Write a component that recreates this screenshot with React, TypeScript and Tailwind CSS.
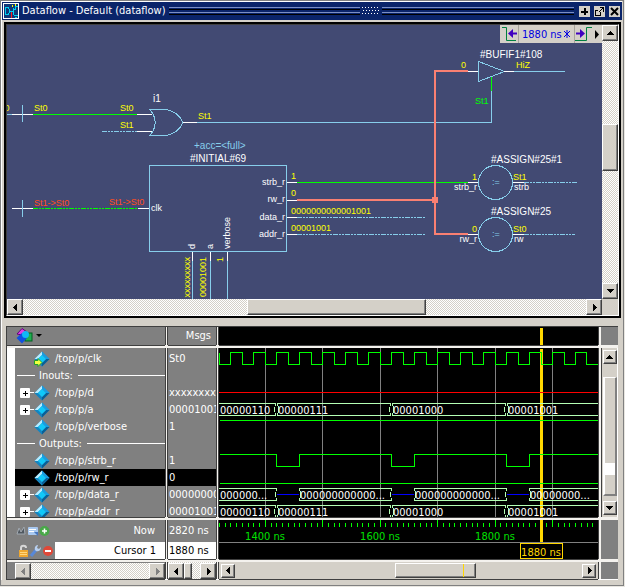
import type { ReactNode } from "react";

const UI_FONT = "font-['DejaVu_Sans_Condensed','DejaVu_Sans',sans-serif]";
const SKY = "#87ceeb";
const SALMON = "#fa8072";
const LIME = "#00ff00";
const YELLOW = "#ffff00";
const GOLD = "#ffd700";
const PALE = "#b4ffb4";
const DITHER =
  "bg-[repeating-conic-gradient(#ffffff_0_25%,#d4d0c8_0_50%)] bg-[length:2px_2px]";
const RAISED =
  "border border-t-white border-l-white border-r-[#404040] border-b-[#404040] bg-[#d4d0c8] shadow-[inset_-1px_-1px_#808080]";

/* ---------- drawing helpers ---------- */

type Seg = { a: number; b: number; at: number; c: string; w?: number };

const H = ({ a, b, at, c, w = 1 }: Seg) => (
  <rect x={a} y={at} width={b - a} height={w} fill={c} />
);
const V = ({ a, b, at, c, w = 1 }: Seg) => (
  <rect x={at} y={a} width={w} height={b - a} fill={c} />
);
const Dash = ({ a, b, at, c }: Seg) => (
  <path d={`M${a} ${at + 0.5}H${b}`} stroke={c} strokeDasharray="5 1 2 1 2 1" fill="none" />
);

type LabelProps = {
  x: number;
  y: number;
  c?: string;
  size?: number;
  end?: boolean;
  up?: boolean;
  children: ReactNode;
};

const Label = ({ x, y, c = "#ffffff", size = 9, end, up, children }: LabelProps) => (
  <text
    x={x}
    y={y}
    fill={c}
    fontSize={size}
    textAnchor={end ? "end" : "start"}
    transform={up ? `rotate(-90 ${x} ${y})` : undefined}
  >
    {children}
  </text>
);

/* ---------- scroll bars ---------- */

type Dir = "left" | "right" | "up" | "down";

const ARROWS: Record<Dir, string> = {
  left: "M5 0V7L1 4V3Z",
  right: "M2 0V7L6 4V3Z",
  up: "M0 5H7L4 1H3Z",
  down: "M0 1H7L4 5H3Z",
};

function ArrowButton({ dir, flat, dim }: { dir: Dir; flat?: boolean; dim?: boolean }) {
  const size = flat ? "h-[14px] w-[14px]" : "h-4 w-4";
  return (
    <button
      type="button"
      aria-label={`Scroll ${dir}`}
      disabled={dim}
      className={`flex shrink-0 items-center justify-center ${size} ${RAISED}`}
    >
      <svg width="7" height="7" shapeRendering="crispEdges">
        <path d={ARROWS[dir]} fill={dim ? "#808080" : "#000000"} />
      </svg>
    </button>
  );
}

/* ---------- title bar ---------- */

function Grooves() {
  return (
    <div className="flex h-2 min-w-0 grow flex-col justify-between">
      <div className="h-[3px] border-t border-b border-t-[#7b8fc4] border-b-black" />
      <div className="h-[3px] border-t border-b border-t-[#7b8fc4] border-b-black" />
    </div>
  );
}

function TitleButton({ label, children }: { label: string; children: ReactNode }) {
  return (
    <button
      type="button"
      aria-label={label}
      className="flex h-[11px] w-[11px] shrink-0 items-center justify-center bg-[#d4d0c8]"
    >
      <svg width="11" height="11" shapeRendering="crispEdges" fill="none" stroke="#000000">
        {children}
      </svg>
    </button>
  );
}

function TitleBar() {
  const dots: ReactNode[] = [];
  for (let row = 0; row < 3; row++)
    for (let i = 0; i < 6; i++)
      dots.push(
        <rect key={`${row}-${i}`} x={i * 3 + (row % 2 ? 3 : 2)} y={row * 3} width="1" height="1" fill="#ffffff" />,
      );
  return (
    <header className="flex h-[18px] items-center bg-[#0a246a] pr-[2px] pl-px text-white">
      <svg width="16" height="16" shapeRendering="crispEdges" aria-hidden="true">
        <rect width="16" height="16" fill="#ffffff" />
        <rect x="1" y="1" width="14" height="14" fill="#103878" />
        <path
          d="M2.500 4.500H5L6.500 7V9L5 11.500H2.500ZM7 8.500H10M10.500 4.500V11.500M10 6.500H13M12.500 6V3.500H15M11 12.500H15M11.500 14.500H14"
          stroke="#00d0f0"
          fill="none"
        />
        <path d="M8.500 9V15" stroke="#ff2020" />
        <path d="M9.500 2V4M12.500 1V3" stroke="#ffff00" />
      </svg>
      <h1 className="ml-[3px] text-[11px] leading-[18px] whitespace-nowrap">
        Dataflow - Default (dataflow)
      </h1>
      <div className="ml-[3px] flex min-w-0 grow items-center">
        <Grooves />
        <svg width="22" height="8" className="shrink-0" shapeRendering="crispEdges">
          {dots}
        </svg>
        <Grooves />
      </div>
      <div className="ml-[5px] flex gap-[4px]">
        <TitleButton label="Zoom pane">
          <path d="M2 5.500H9M5.500 2V9" strokeWidth="2" />
        </TitleButton>
        <TitleButton label="Undock">
          <path d="M5.500 1.500H9.500V5.500M9 2L5 6M4 4.500H1.500V9.500H6.500V6" />
        </TitleButton>
        <TitleButton label="Close">
          <path d="M2 2L9 9M9 2L2 9" strokeWidth="2" shapeRendering="auto" />
        </TitleButton>
      </div>
    </header>
  );
}

/* ---------- dataflow schematic ---------- */

function TimeBar() {
  return (
    <div className="absolute top-0 right-0 flex h-[18px] items-center bg-[#d4d0c8]">
      <button type="button" aria-label="Previous event" className="h-[18px] w-[18px]">
        <svg width="18" height="18" fill="none">
          <path d="M2 2.500H6.500V15.500H16" stroke="#008040" />
          <path d="M17 8.500H11" stroke="#4000c0" strokeWidth="2" />
          <path d="M13 4V13L8 8.500Z" fill="#4000c0" />
        </svg>
      </button>
      <label className="flex h-[18px] items-center border-x border-[#a8a49c] px-[3px] text-[#0000e0]">
        <input
          aria-label="Current time"
          defaultValue="1880 ns"
          className="h-[18px] w-[41px] bg-transparent text-[11px] outline-none"
        />
        <svg width="8" height="8" fill="none" stroke="#0000e0" aria-hidden="true">
          <path d="M4 0V8M1 1L4 4L7 1M1 7L4 4L7 7" />
        </svg>
      </label>
      <button type="button" aria-label="Next event" className="h-[18px] w-[17px]">
        <svg width="17" height="18" fill="none">
          <path d="M0 15.500H11.500V2.500H17" stroke="#008040" />
          <path d="M1 8.500H6" stroke="#4000c0" strokeWidth="2" />
          <path d="M5 4V13L10 8.500Z" fill="#4000c0" />
        </svg>
      </button>
      <button type="button" aria-label="More" className="h-[18px] w-[10px]">
        <svg width="10" height="18">
          <path d="M3 5V14L7 9.500Z" fill="#000000" />
        </svg>
      </button>
    </div>
  );
}

const OUTPUT_PINS = [
  { y: 182, name: "strb_r", value: "1" },
  { y: 199, name: "rw_r", value: "0" },
  { y: 217, name: "data_r", value: "0000000000001001" },
  { y: 234, name: "addr_r", value: "00001001" },
];

const BOTTOM_PINS = [
  { x: 192, name: "d", value: "xxxxxxxxx", vx: 190 },
  { x: 210, name: "a", value: "00001001", vx: 206 },
  { x: 227, name: "verbose", value: "1", vx: 223 },
];

const ASSIGNS = [
  { y: 182, title: "#ASSIGN#25#1", level: "1", src: "strb_r", out: "St1", dst: "strb", end: 578 },
  { y: 234, title: "#ASSIGN#25", level: "0", src: "rw_r", out: "St0", dst: "rw", end: 575 },
];

function Schematic() {
  return (
    <svg
      viewBox="7 25 595 274"
      width="595"
      height="274"
      className="block shrink-0 font-['Liberation_Sans',Arial,sans-serif]"
      shapeRendering="crispEdges"
      role="img"
      aria-label="Dataflow schematic"
    >
      {/* i1: OR gate */}
      <H a={7} b={12} at={114} c={SKY} />
      <H a={12} b={33} at={114} c="#ffffff" />
      <H a={33} b={137} at={114} c={LIME} />
      <H a={137} b={152} at={114} c="#ffffff" />
      <V a={105} b={122} at={22} c={SKY} />
      <Dash a={102} b={137} at={131} c={SKY} />
      <H a={137} b={152} at={131} c="#ffffff" />
      <path
        d="M149.500 109.500H166C174 111 180 116 183 122.500C180 129 174 134 166 135.500H149.500C157 128 157 117 149.500 109.500Z"
        fill="none"
        stroke={SKY}
      />
      <H a={183} b={197} at={122} c="#ffffff" />
      <H a={197} b={492} at={122} c={SKY} />
      <V a={91} b={122} at={491} c={SKY} />
      <V a={77} b={91} at={491} c={LIME} />
      <Label x={-4} y={111} c={YELLOW}>St0</Label>
      <Label x={34} y={111} c={YELLOW}>St0</Label>
      <Label x={120} y={111} c={YELLOW}>St0</Label>
      <Label x={120} y={128} c={YELLOW}>St1</Label>
      <Label x={198} y={119} c={YELLOW}>St1</Label>
      <Label x={153} y={102} size={10}>i1</Label>

      {/* #BUFIF1#108: tri-state buffer */}
      <path d="M478.500 61.500V81.500L504.500 71.500Z" fill="none" stroke={SKY} />
      <H a={468} b={478} at={71} c="#ffffff" />
      <H a={504} b={514} at={71} c="#ffffff" />
      <H a={514} b={565} at={71} c={SKY} />
      <Label x={480} y={58} size={10}>#BUFIF1#108</Label>
      <Label x={461} y={68} c={YELLOW}>0</Label>
      <Label x={516} y={68} c={YELLOW}>HiZ</Label>
      <Label x={475} y={104} c={LIME}>St1</Label>

      {/* #INITIAL#69: process block */}
      <rect x="149.500" y="165.500" width="137" height="86" fill="none" stroke={SKY} />
      <Label x={194} y={149} c={SKY} size={10}>+acc=&lt;full&gt;</Label>
      <Label x={190} y={162} size={10}>#INITIAL#69</Label>
      <H a={12} b={33} at={208} c="#ffffff" />
      <V a={200} b={217} at={22} c={SKY} />
      <Dash a={33} b={138} at={208} c={LIME} />
      <H a={138} b={149} at={208} c="#ffffff" />
      <Label x={34} y={206} c="#ff4d20">St1-&gt;St0</Label>
      <Label x={109} y={205} c="#ff4d20">St1-&gt;St0</Label>
      <Label x={151} y={211}>clk</Label>

      <H a={297} b={468} at={182} c={LIME} />
      <Dash a={297} b={426} at={217} c={SKY} />
      <Dash a={297} b={426} at={234} c={SKY} />
      {OUTPUT_PINS.map((p) => (
        <g key={p.name}>
          <H a={287} b={297} at={p.y === 199 ? 200 : p.y} c="#ffffff" />
          <Label x={285} y={p.y + 3} end>{p.name}</Label>
          <Label x={291} y={p.y - 3} c={YELLOW}>{p.value}</Label>
        </g>
      ))}
      {BOTTOM_PINS.map((p) => (
        <g key={p.name}>
          <V a={252} b={261} at={p.x} c="#ffffff" />
          <V a={261} b={299} at={p.x} c={SKY} />
          <Label x={p.x + 3} y={249} up>{p.name}</Label>
          <Label x={p.vx} y={257} c={YELLOW} up end>{p.value}</Label>
        </g>
      ))}

      {/* assign nodes */}
      {ASSIGNS.map((n) => (
        <g key={n.title}>
          <circle cx="495.500" cy={n.y + 0.5} r="17" fill="none" stroke={SKY} />
          <H a={468} b={478} at={n.y} c="#ffffff" />
          <H a={513} b={524} at={n.y} c="#ffffff" />
          <Dash a={524} b={n.end} at={n.y} c={SKY} />
          <Label x={492} y={n.y + 3} c={SKY}>:=</Label>
          <Label x={491} y={n.y - 19} size={10}>{n.title}</Label>
          <Label x={477} y={n.y - 2} c={YELLOW} end>{n.level}</Label>
          <Label x={477} y={n.y + 8} end>{n.src}</Label>
          <Label x={513} y={n.y - 2} c={YELLOW}>{n.out}</Label>
          <Label x={514} y={n.y + 8}>{n.dst}</Label>
        </g>
      ))}

      {/* highlighted rw_r net */}
      <H a={297} b={436} at={199} c={SALMON} w={2} />
      <V a={70} b={235} at={434} c={SALMON} w={2} />
      <H a={434} b={468} at={70} c={SALMON} w={2} />
      <H a={434} b={468} at={233} c={SALMON} w={2} />
      <rect x="432" y="197" width="6" height="6" fill={SALMON} />
    </svg>
  );
}

function DataflowPane() {
  return (
    <section className="mt-[2px] mr-px ml-[2px] border-2 border-black">
      <div className="border border-t-[#404040] border-r-white border-b-white border-l-[#404040] bg-[#d4d0c8]">
        <div className="flex">
          <div className="relative min-w-0 grow overflow-hidden bg-[#424a73]">
            <Schematic />
            <TimeBar />
          </div>
          <div className={`flex w-4 shrink-0 flex-col ${DITHER}`}>
            <ArrowButton dir="up" />
            <div className="grow-[84] basis-0" />
            <div className={`grow-[45] basis-0 ${RAISED}`} />
            <div className="grow-[113] basis-0" />
            <ArrowButton dir="down" />
          </div>
        </div>
        <div className="flex">
          <div className={`flex h-4 min-w-0 grow ${DITHER}`}>
            <ArrowButton dir="left" />
            <div className="grow-[225] basis-0" />
            <div className={`grow-[177] basis-0 ${RAISED}`} />
            <div className="grow-[161] basis-0" />
            <ArrowButton dir="right" />
          </div>
          <div className="w-4 shrink-0" />
        </div>
      </div>
    </section>
  );
}

/* ---------- wave window: names and values ---------- */

type Row = { name: string; value?: string; group?: boolean; expand?: boolean; input?: boolean; selected?: boolean };

const ROWS: Row[] = [
  { name: "/top/p/clk", value: "St0", input: true },
  { name: "Inouts:", group: true },
  { name: "/top/p/d", value: "xxxxxxxx", expand: true },
  { name: "/top/p/a", value: "00001001", expand: true },
  { name: "/top/p/verbose", value: "1" },
  { name: "Outputs:", group: true },
  { name: "/top/p/strb_r", value: "1" },
  { name: "/top/p/rw_r", value: "0", selected: true },
  { name: "/top/p/data_r", value: "00000000", expand: true },
  { name: "/top/p/addr_r", value: "00001001", expand: true },
];

function Diamond({ input }: { input?: boolean }) {
  return (
    <svg width="16" height="16" className="shrink-0" aria-hidden="true">
      <path d="M8 0.500L15.500 8L8 15.500L0.500 8Z" fill="#1a8fc8" />
      <path d="M8 0.500V4L4 8H0.500Z" fill="#b8ecff" />
      <path d="M8 0.500L15.500 8H12L8 4Z" fill="#1c9ce0" />
      <path d="M0.500 8H4L8 12V15.500Z" fill="#1484c0" />
      <path d="M15.500 8H12L8 12V15.500Z" fill="#0a5f96" />
      <path d="M8 4L12 8L8 12L4 8Z" fill="#10c8f8" />
      {input && (
        <path d="M0.500 9.500H4V7.500L8 11.500L4 15.500V13.500H0.500Z" fill="#f0ff40" stroke="#20a030" />
      )}
    </svg>
  );
}

function NameRow({ row }: { row: Row }) {
  if (row.group)
    return (
      <li className="flex h-[17px] items-center pl-[2px] leading-[17px]">
        <span className="mr-1 h-px w-[18px] bg-white" />
        {row.name}
        <span className="ml-[5px] h-px grow bg-white" />
      </li>
    );
  return (
    <li className={`flex h-[17px] items-center pl-[5px] leading-[17px] ${row.selected ? "bg-black" : ""}`}>
      <span className="flex w-[14px] shrink-0 items-center">
        {row.expand && (
          <>
            <button
              type="button"
              aria-label={`Expand ${row.name}`}
              className="h-[10px] w-[10px] shrink-0 rounded-[1px] bg-white"
            >
              <svg width="10" height="10" shapeRendering="crispEdges">
                <path d="M3 5.500H8M5.500 3V8" stroke="#000000" />
              </svg>
            </button>
            <span className="h-px grow bg-white" />
          </>
        )}
      </span>
      <Diamond input={row.input} />
      <span className="ml-[5px]">{row.name}</span>
    </li>
  );
}

const CELL = "shadow-[-1px_0_#404040,1px_0_#404040,0_1px_#404040] min-w-0 overflow-hidden";

/* ---------- wave window: traces ---------- */

const X0 = 219;
const X1 = 1219;
const CURSOR_X = 540;
const edge = (n: number) => Math.floor(219.3 + 11.49 * n);
const GRID = Array.from({ length: 16 }, (_, i) => Math.floor(265.3 + 57.45 * i));

function clockPath() {
  let d = "M219.500 352.500V364.500";
  for (let n = 1; edge(n) < X1; n++) d += `H${edge(n) + 0.5}V${n % 2 ? 352.5 : 364.5}`;
  return d;
}

function Strip({ y, h, children }: { y: number; h: number; children: ReactNode }) {
  return (
    <svg
      viewBox={`${X0} ${y} ${X1 - X0} ${h}`}
      width={X1 - X0}
      height={h}
      className="block max-w-none"
      shapeRendering="crispEdges"
      fill="none"
    >
      {children}
    </svg>
  );
}

function Bus({ from, to, y, text, open }: { from: number; to: number; y: number; text: string; open?: boolean }) {
  return (
    <>
      <H a={from} b={to} at={y} c={PALE} />
      <H a={from} b={to} at={y + 12} c={PALE} />
      {!open && (
        <path
          d={`M${from + 0.5} ${y + 1}V${y + 3}M${from + 1.5} ${y + 3}V${y + 10}M${from + 0.5} ${y + 10}V${y + 12}`}
          stroke={PALE}
        />
      )}
      <path
        d={`M${to - 0.5} ${y + 1}V${y + 3}M${to - 1.5} ${y + 4}V${y + 9}M${to - 0.5} ${y + 10}V${y + 12}`}
        stroke={PALE}
      />
      <Label x={from + (open ? 3 : 1)} y={y + 11} size={11}>{text}</Label>
    </>
  );
}

function Traces() {
  const words = [
    { from: 217, to: 276, text: "00000110", open: true },
    { from: 277, to: 391, text: "00000111" },
    { from: 392, to: 506, text: "00001000" },
    { from: 507, to: X1, text: "00001001" },
  ];
  const data = [
    { from: 217, to: 277, text: "000000...", open: true },
    { from: 299, to: 392, text: "000000000000..." },
    { from: 414, to: 507, text: "000000000000..." },
    { from: 529, to: X1, text: "00000000..." },
  ];
  return (
    <Strip y={348} h={169}>
      {GRID.map((x) => (
        <V key={x} a={348} b={517} at={x} c="#808080" />
      ))}
      <rect x={CURSOR_X} y={349} width="3" height="168" fill={GOLD} />
      <path d={clockPath()} stroke={LIME} />
      <H a={X0} b={X1} at={392} c="#ff0000" />
      {words.map((w) => (
        <Bus key={w.from} {...w} y={403} />
      ))}
      <H a={220} b={X1} at={420} c={LIME} />
      <path
        d={`M220 454.500H276.500V466.500H299.500V454.500H391.500V466.500H414.500V454.500H506.500V466.500H529.500V454.500H${X1}`}
        stroke={LIME}
      />
      <H a={220} b={X1} at={483} c={LIME} />
      {data.map((w) => (
        <Bus key={w.from} {...w} y={488} />
      ))}
      {[276, 391, 506].map((x) => (
        <H key={x} a={x + 1} b={x + 23} at={494} c="#0000ff" />
      ))}
      {words.map((w) => (
        <Bus key={w.from} {...w} y={505} />
      ))}
    </Strip>
  );
}

function Ruler() {
  const ticks = Array.from({ length: 170 }, (_, i) => Math.floor(265.3 + 5.745 * (i - 8)));
  return (
    <Strip y={520} h={39}>
      {ticks.map((x, i) => (
        <V key={x} a={(i - 8) % 10 === 0 ? 520 : 523} b={527} at={x} c={LIME} />
      ))}
      {["1400 ns", "1600 ns", "1800 ns"].map((t, i) => (
        <text key={t} x={265 + i * 115} y={540} textAnchor="middle" fontSize="11" fill="#00e000">
          {t}
        </text>
      ))}
      <H a={X0} b={X1} at={542} c="#808080" />
      <rect x={CURSOR_X} y={520} width="3" height="22" fill={GOLD} />
      <rect x="520.500" y="543.500" width="42" height="15" fill="#000000" stroke={GOLD} />
      <text x="541" y="556" textAnchor="middle" fontSize="11" fill={GOLD}>
        1880 ns
      </text>
    </Strip>
  );
}

/* ---------- small tool icons ---------- */

function NowIcons() {
  return (
    <svg width="34" height="12" className="shrink-0" aria-hidden="true">
      <path d="M1 9L3 3L5 7L8 2L9 9Z" fill="#505860" stroke="#a0a8b0" />
      <rect x="12" y="2" width="10" height="8" rx="1" fill="#a8c8f0" />
      <path d="M13 4.500H20M13 6.500H18" stroke="#ffffff" />
      <path d="M18 7H22V11Z" fill="#4878c0" />
      <circle cx="28.500" cy="6" r="5" fill="#48a848" />
      <path d="M26 6H31M28.500 3.500V8.500" stroke="#ffffff" strokeWidth="1.500" />
    </svg>
  );
}

function CursorIcons() {
  return (
    <svg width="36" height="14" className="shrink-0" aria-hidden="true">
      <path d="M3 7V4C3 1 8 1 8 4" fill="none" stroke="#d8d8d8" strokeWidth="2" />
      <rect x="1" y="6" width="9" height="7" fill="#f0a830" />
      <path d="M2 8.500H9M2 10.500H9" stroke="#ffd880" />
      <path d="M13 12L18 6" stroke="#5888d8" strokeWidth="3" />
      <path d="M17 6C16 2 19 1 20 1L19 4L21 5L23 3C23 7 20 8 18 7Z" fill="#b8d0f0" />
      <circle cx="30" cy="7" r="5" fill="#e04838" />
      <path d="M27 7H33" stroke="#ffffff" strokeWidth="2" />
    </svg>
  );
}

function GroupIcon() {
  return (
    <svg width="17" height="16" aria-hidden="true">
      <path d="M1 6L6 0.500L11 4L6 7Z" fill="#e040e0" stroke="#600080" />
      <rect x="9" y="5" width="7" height="8" fill="#20b050" stroke="#006020" />
      <path d="M6 5L11 10L6 15.500L0.500 10Z" fill="#1050e0" />
      <circle cx="9.500" cy="6.500" r="3.500" fill="#10b8f8" />
    </svg>
  );
}

/* ---------- wave window ---------- */

function WavePane() {
  return (
    <section className="mt-2 mr-1 ml-1 border-t border-l border-[#404040]">
      <div className="grid grid-cols-[158px_48px_minmax(0,1fr)_17px] gap-[3px] border-b border-white bg-[#f4f2ee] text-[11px] text-white">
        {/* header */}
        <div className={`flex h-[18px] items-center bg-[#808080] pl-[9px] ${CELL}`}>
          <button type="button" aria-label="Signal groups" className="flex items-center gap-[3px]">
            <GroupIcon />
            <svg width="6" height="4">
              <path d="M0 0H6L3 3Z" fill="#000000" />
            </svg>
          </button>
        </div>
        <div className={`bg-[#808080] pr-[5px] text-right leading-[18px] ${CELL}`}>Msgs</div>
        <div className={`bg-black ${CELL}`}>
          <Strip y={327} h={18}>
            <rect x={CURSOR_X} y={328} width="3" height="17" fill={GOLD} />
          </Strip>
        </div>
        <div className="bg-[#808080]" />

        {/* signals */}
        <div className={`h-[169px] bg-white pl-2 ${CELL}`}>
          <ul className="bg-[#808080] pt-[2px]">
            {ROWS.map((r) => (
              <NameRow key={r.name} row={r} />
            ))}
          </ul>
        </div>
        <div className={`h-[169px] bg-[#808080] ${CELL}`}>
          <ul className="pt-[2px]">
            {ROWS.map((r) => (
              <li
                key={r.name}
                className={`h-[17px] pl-px leading-[17px] ${r.selected ? "bg-black" : ""}`}
              >
                {r.value}
              </li>
            ))}
          </ul>
        </div>
        <div className={`h-[169px] bg-black ${CELL}`}>
          <Traces />
        </div>
        <div className="flex flex-col items-center border-r border-l border-l-[#404040] border-r-white bg-[#d4d0c8] py-[2px]">
          <ArrowButton dir="up" flat />
          <div className="grow-[13] basis-0" />
          <div className="flex w-[14px] grow-[119] basis-0 flex-col border-t border-r-2 border-b-2 border-l-2 border-t-white border-r-[#808080] border-b-[#808080] border-l-white bg-[#d4d0c8]">
            <div className="grow-[86] basis-0" />
            <div className="grow-[12] basis-0 bg-white" />
            <div className="grow-[19] basis-0" />
          </div>
          <div className="grow-[5] basis-0" />
          <ArrowButton dir="down" flat />
        </div>

        {/* cursor rows */}
        <div className={`bg-[#808080] ${CELL}`}>
          <div className="flex h-[22px] items-center justify-between pr-[10px] pl-[9px]">
            <NowIcons />
            <span>Now</span>
          </div>
          <div className="flex h-[17px] items-center pl-[11px]">
            <CursorIcons />
            <input
              aria-label="Cursor name"
              defaultValue="Cursor 1"
              className="ml-px h-[17px] min-w-0 grow bg-white pr-[9px] text-right text-black outline-none"
            />
          </div>
        </div>
        <div className={`bg-[#808080] ${CELL}`}>
          <div className="h-[22px] pl-px leading-[22px]">2820 ns</div>
          <input
            aria-label="Cursor time"
            defaultValue="1880 ns"
            className="block h-[17px] w-full bg-white pl-px text-black outline-none"
          />
        </div>
        <div className={`bg-black ${CELL}`}>
          <Ruler />
        </div>
        <div className="bg-[#808080]" />

        {/* scroll bars */}
        <div className={`flex h-[17px] bg-[#808080] pt-px pl-2 ${CELL}`}>
          <div className={`flex min-w-0 grow justify-between ${DITHER}`}>
            <ArrowButton dir="left" dim />
            <ArrowButton dir="right" dim />
          </div>
        </div>
        <div className={`flex h-[17px] pt-px ${DITHER} ${CELL}`}>
          <ArrowButton dir="left" />
          <div className={`w-2 ${RAISED}`} />
          <div className="grow" />
          <ArrowButton dir="right" />
        </div>
        <div className={`flex h-[17px] items-center bg-[#d4d0c8] px-[2px] ${CELL}`}>
          <ArrowButton dir="left" flat />
          <div className="grow-[161] basis-0" />
          <div className={`flex h-[15px] grow-[79] basis-0 ${RAISED}`}>
            <div className="grow-[66] basis-0" />
            <div className="w-px bg-[#ffd700]" />
            <div className="grow-[10] basis-0" />
          </div>
          <div className="grow-[107] basis-0" />
          <ArrowButton dir="right" flat />
        </div>
        <div className="bg-[#808080]" />
      </div>
    </section>
  );
}

export default function App() {
  return (
    <div className={`bg-[#e8e6e0] pr-px pb-px ${UI_FONT}`}>
      <main className="border border-[#808080] bg-[#d4d0c8] pr-px pb-[5px]">
        <div className="border-t border-l border-white">
          <TitleBar />
          <DataflowPane />
          <WavePane />
        </div>
      </main>
    </div>
  );
}
